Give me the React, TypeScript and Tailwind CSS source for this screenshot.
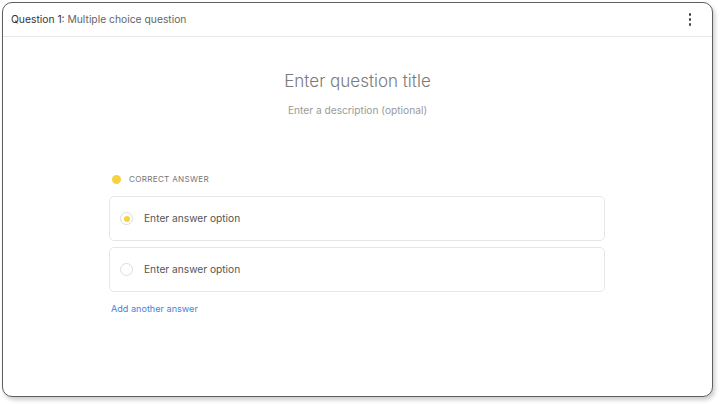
import React from "react";

export default function App() {
  return (
    <div className="w-[720px] h-[404px] bg-white pt-[2px] pl-[2px]" style={{ fontFamily: "Inter, 'Noto Sans', sans-serif" }}>
      <div className="w-[711px] h-[395px] rounded-[10px] border-[1.5px] border-[#5f5f5f] bg-white shadow-[2px_3px_4px_rgba(0,0,0,0.2)] flex flex-col overflow-hidden">
        <div className="h-[34px] border-b border-[#e8e8e8] flex items-center justify-between pl-[8px] pr-[21px] shrink-0">
          <div className="text-[10.3px] text-[#666]">
            <span className="text-[#333]">Question 1:</span> Multiple choice question
          </div>
          <div className="flex flex-col gap-[2.5px] items-center">
            <span className="w-[2.5px] h-[2.5px] rounded-full bg-[#444]" />
            <span className="w-[2.5px] h-[2.5px] rounded-full bg-[#444]" />
            <span className="w-[2.5px] h-[2.5px] rounded-full bg-[#444]" />
          </div>
        </div>
        <div className="flex flex-col items-center pt-[32px]">
          <div className="text-[17px] text-[#7a7a7a] leading-[24px] font-light">Enter question title</div>
          <div className="text-[10.2px] text-[#9a9a9a] mt-[10px] leading-[14px]">Enter a description (optional)</div>
        </div>
        <div className="ml-[106px] w-[496px] mt-[55px] flex flex-col">
          <div className="flex items-center h-[14px]">
            <span className="w-[9px] h-[9px] rounded-full bg-[#f6d23f] ml-[3px]" />
            <span className="ml-[8px] text-[8.1px] tracking-[0.3px] text-[#777]">CORRECT ANSWER</span>
          </div>
          <div className="mt-[10px] h-[45px] border border-[#e6e6e6] rounded-[5px] flex items-center pl-[10px]">
            <span className="w-[13px] h-[13px] rounded-full border border-[#dcdcdc] flex items-center justify-center">
              <span className="w-[6px] h-[6px] rounded-full bg-[#f6d23f]" />
            </span>
            <span className="ml-[11px] text-[10.2px] text-[#555]">Enter answer option</span>
          </div>
          <div className="mt-[6px] h-[45px] border border-[#e6e6e6] rounded-[5px] flex items-center pl-[10px]">
            <span className="w-[13px] h-[13px] rounded-full border border-[#dcdcdc]" />
            <span className="ml-[11px] text-[10.2px] text-[#555]">Enter answer option</span>
          </div>
          <div className="mt-[10px] text-[9.1px] text-[#4b7fd8] pl-[2px]">Add another answer</div>
        </div>
      </div>
    </div>
  );
}
